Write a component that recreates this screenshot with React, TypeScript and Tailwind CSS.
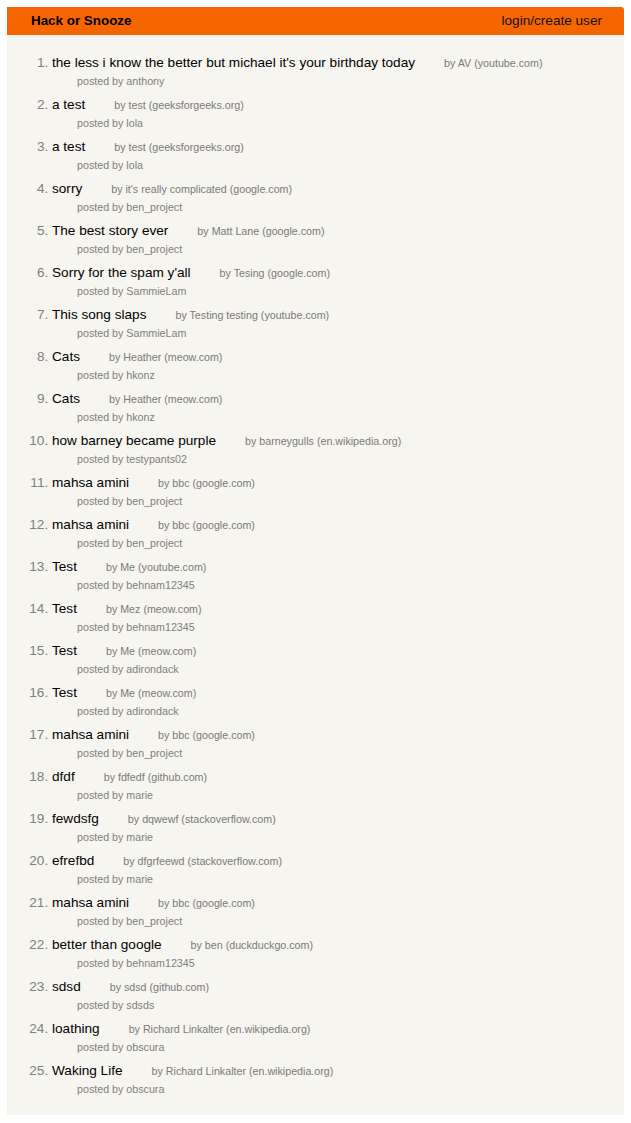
import React from "react";

const stories: [string, string, string, string][] = [
  ["the less i know the better but michael it's your birthday today", "AV", "youtube.com", "anthony"],
  ["a test", "test", "geeksforgeeks.org", "lola"],
  ["a test", "test", "geeksforgeeks.org", "lola"],
  ["sorry", "it's really complicated", "google.com", "ben_project"],
  ["The best story ever", "Matt Lane", "google.com", "ben_project"],
  ["Sorry for the spam y'all", "Tesing", "google.com", "SammieLam"],
  ["This song slaps", "Testing testing", "youtube.com", "SammieLam"],
  ["Cats", "Heather", "meow.com", "hkonz"],
  ["Cats", "Heather", "meow.com", "hkonz"],
  ["how barney became purple", "barneygulls", "en.wikipedia.org", "testypants02"],
  ["mahsa amini", "bbc", "google.com", "ben_project"],
  ["mahsa amini", "bbc", "google.com", "ben_project"],
  ["Test", "Me", "youtube.com", "behnam12345"],
  ["Test", "Mez", "meow.com", "behnam12345"],
  ["Test", "Me", "meow.com", "adirondack"],
  ["Test", "Me", "meow.com", "adirondack"],
  ["mahsa amini", "bbc", "google.com", "ben_project"],
  ["dfdf", "fdfedf", "github.com", "marie"],
  ["fewdsfg", "dqwewf", "stackoverflow.com", "marie"],
  ["efrefbd", "dfgrfeewd", "stackoverflow.com", "marie"],
  ["mahsa amini", "bbc", "google.com", "ben_project"],
  ["better than google", "ben", "duckduckgo.com", "behnam12345"],
  ["sdsd", "sdsd", "github.com", "sdsds"],
  ["loathing", "Richard Linkalter", "en.wikipedia.org", "obscura"],
  ["Waking Life", "Richard Linkalter", "en.wikipedia.org", "obscura"],
];

export default function App() {
  return (
    <div className="min-h-[1123px] bg-white pt-[7px] px-[7px]" style={{ fontFamily: '"Liberation Sans", Arial, sans-serif' }}>
      <div className="bg-[#f6f5f0] rounded-tr-[3px] overflow-hidden pb-[12px]">
        <nav className="h-[28px] bg-[#f66600] flex items-center justify-between pl-[24px] pr-[22px]">
          <span className="text-[13.4px] font-bold text-black">Hack or Snooze</span>
          <span className="text-[13.6px] text-[#111]">login/create user</span>
        </nav>
        <ol className="list-decimal list-outside pl-[45px] pt-[18px] marker:text-[#808080]">
          {stories.map(([title, author, host, user], i) => (
            <li key={i} className="mb-[6px] text-[13.6px] text-[#808080]">
              <div className="h-[20px] leading-[20px] whitespace-nowrap">
                <span className="text-black">{title}</span>
                <span className="ml-[29px] text-[10.7px] text-[#7a7a7a]">by {author} ({host})</span>
              </div>
              <div className="h-[16px] leading-[16px] ml-[25px] text-[10.7px] text-[#808080]">posted by {user}</div>
            </li>
          ))}
        </ol>
      </div>
    </div>
  );
}
